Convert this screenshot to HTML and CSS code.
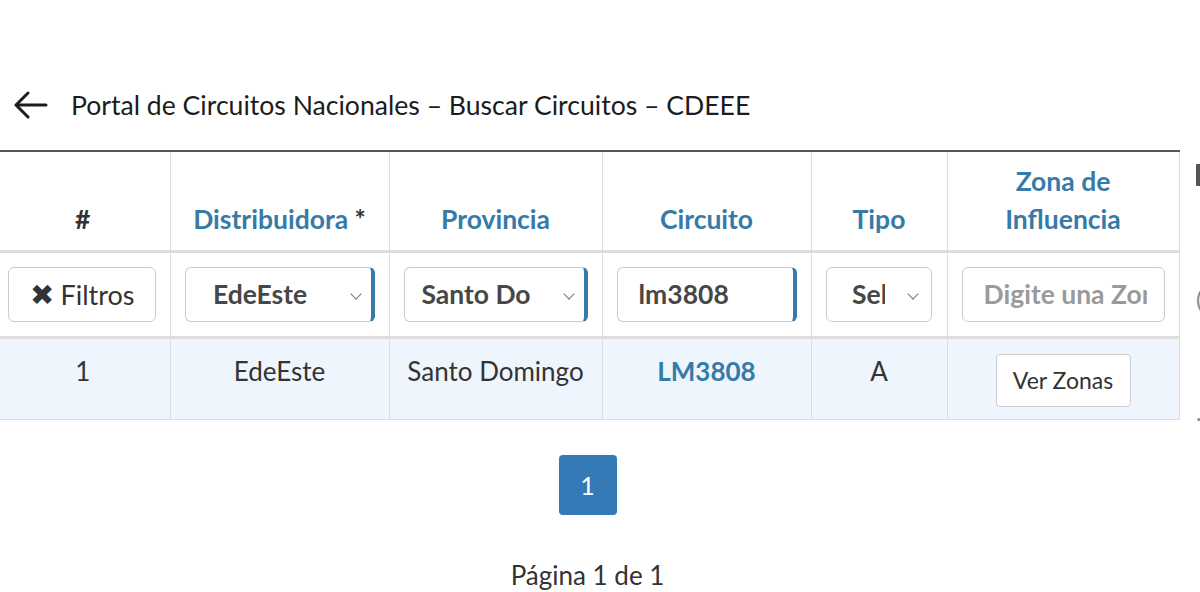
FILE: index.html
```html
<!DOCTYPE html>
<html lang="es">
<head>
<meta charset="utf-8">
<title>Buscar Circuitos</title>
<link rel="stylesheet" href="styles.css">
</head>
<body>
<div class="page">
  <div class="topbar">
    <svg class="back" width="34" height="28" viewBox="0 0 34 28" fill="none" stroke="#1c1c1c" stroke-width="3" stroke-linecap="round" stroke-linejoin="round">
      <path d="M32 14H3"/>
      <path d="M14 2L2 14L14 26"/>
    </svg>
    <h1 class="title">Portal de Circuitos Nacionales – Buscar Circuitos – CDEEE</h1>
  </div>

  <div class="layout">
    <div class="main">
      <table class="grid">
        <colgroup>
          <col class="c1"><col class="c2"><col class="c3"><col class="c4"><col class="c5"><col class="c6">
        </colgroup>
        <thead>
          <tr class="head">
            <th class="dark">#</th>
            <th>Distribuidora<span class="req"> *</span></th>
            <th>Provincia</th>
            <th>Circuito</th>
            <th>Tipo</th>
            <th>Zona de<br>Influencia</th>
          </tr>
          <tr class="filters">
            <td><button class="btn filtros"><span class="x">✖</span> Filtros</button></td>
            <td><div class="sel focus w190"><span class="val">EdeEste</span><span class="chev"></span></div></td>
            <td><div class="sel focus w184"><span class="val">Santo Do</span><span class="chev"></span></div></td>
            <td><div class="inp focus w180"><span class="val">lm3808</span></div></td>
            <td><div class="sel w106"><span class="val">Sel</span><span class="chev"></span></div></td>
            <td><div class="inp w203"><span class="ph">Digite una Zona</span></div></td>
          </tr>
        </thead>
        <tbody>
          <tr class="data">
            <td>1</td>
            <td>EdeEste</td>
            <td>Santo Domingo</td>
            <td><a class="link">LM3808</a></td>
            <td>A</td>
            <td><button class="btn ver">Ver Zonas</button></td>
          </tr>
        </tbody>
      </table>

      <div class="pager">
        <span class="pg">1</span>
      </div>
      <p class="pageinfo">Página 1 de 1</p>
    </div>
    <div class="side">
      <span class="side-bar"></span>
      <span class="side-paren">(</span>
      <span class="side-dot">.</span>
    </div>
  </div>
</div>
</body>
</html>
```
FILE: styles.css
```css
* { box-sizing: border-box; }
html, body { margin: 0; padding: 0; background: #fff; }
body {
  font-family: Lato, "Liberation Sans", sans-serif;
  color: #333;
  width: 1200px;
  height: 592px;
  overflow: hidden;
}
.page { padding-top: 88px; }
.topbar {
  display: flex;
  align-items: center;
  height: 34px;
  padding-left: 14px;
}
.back { flex: none; }
.title {
  margin: 0 0 0 23px;
  font-family: Lato, "Noto Sans", sans-serif;
  font-weight: 400;
  font-size: 26.6px;
  color: #1c1c1c;
  white-space: nowrap;
}
.layout {
  display: flex;
  margin-top: 28px;
}
.main {
  width: 1183px;
  margin-left: -4px;
  flex: none;
}
.grid {
  width: 1183px;
  table-layout: fixed;
  border-collapse: collapse;
  border-top: 2px solid #555;
}
.c1 { width: 174px; }
.c2 { width: 219px; }
.c3 { width: 213px; }
.c4 { width: 209px; }
.c5 { width: 136px; }
.c6 { width: 232px; }
.grid th, .grid td {
  border-left: 1px solid #ddd;
  border-right: 1px solid #ddd;
  text-align: center;
  padding: 0 6px;
}
.grid tr > :first-child { border-left: none; }
.head th {
  height: 100px;
  vertical-align: bottom;
  padding-bottom: 12px;
  font-size: 26.5px;
  line-height: 38px;
  font-weight: 700;
  color: #367aa8;
  border-bottom: 3px solid #ddd;
  white-space: nowrap;
}
.head th.dark { color: #333; }
.req { color: #333; }
.filters td {
  height: 86px;
  border-bottom: 3px solid #ddd;
  padding: 0 14px 0 14px;
}
.filters td:first-child { padding-left: 12px; padding-right: 14px; }
.data td {
  height: 82px;
  background: #eef5fd;
  border-bottom: 1px solid #ddd;
  font-size: 26px;
  color: #333;
  vertical-align: top;
  padding-top: 16px;
}
.data td:last-child { padding-top: 15px; }
.link { color: #367aa8; font-weight: 700; }

.btn {
  font-family: Lato, sans-serif;
  background: #fff;
  border: 1px solid #ccc;
  border-radius: 6px;
  color: #333;
  cursor: pointer;
}
.filtros {
  width: 148px;
  height: 55px;
  font-size: 27px;
  padding: 0;
}
.filtros .x { font-size: 29px; color: #333; }
.ver {
  width: 135px;
  height: 53px;
  font-size: 23px;
  border-radius: 4px;
  padding: 0;
}

.sel, .inp {
  position: relative;
  height: 55px;
  border: 1px solid #ccc;
  border-radius: 6px;
  background: #fff;
  display: flex;
  align-items: center;
  font-size: 26.5px;
  font-weight: 700;
  color: #474747;
  overflow: hidden;
  white-space: nowrap;
  margin: 0 auto;
}
.focus { border-right: 4px solid #367aa8; }
.w190 { width: 190px; }
.w184 { width: 184px; }
.w180 { width: 180px; }
.w106 { width: 106px; }
.w203 { width: 203px; }
.sel .val { flex: 1; text-align: center; padding-right: 36px; overflow: hidden; }
.sel.w106 .val { flex: none; width: 58px; text-align: left; padding: 0 0 0 25px; overflow: hidden; }
.inp { padding: 0 17px 0 21px; }
.inp .ph { color: #9a9a9a; overflow: hidden; text-overflow: clip; }
.chev {
  position: absolute;
  right: 14px;
  top: 22px;
  width: 8px;
  height: 8px;
  border-right: 1px solid #777;
  border-bottom: 1px solid #777;
  transform: rotate(45deg);
}
.focus .chev { right: 11px; }

.pager {
  display: flex;
  justify-content: center;
  margin-top: 35px;
}
.pg {
  display: flex;
  align-items: center;
  justify-content: center;
  width: 58px;
  height: 60px;
  border-radius: 4px;
  background: #337ab7;
  color: #fff;
  font-size: 25px;
}
.pageinfo {
  margin: 44px 0 0;
  text-align: center;
  font-size: 26px;
  line-height: 32px;
  color: #333;
}

.side {
  position: relative;
  flex: 1;
  display: flex;
  flex-direction: column;
  align-items: flex-start;
  padding-left: 17px;
}
.side-bar {
  margin-top: 14px;
  width: 5px;
  height: 22px;
  background: #555;
  border-radius: 1px;
}
.side-paren {
  margin-top: 98px;
  font-size: 24px;
  color: #888;
}
.side-dot {
  margin-top: 84px;
  font-size: 24px;
  color: #888;
}
```
